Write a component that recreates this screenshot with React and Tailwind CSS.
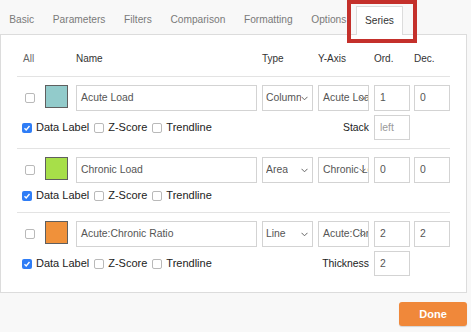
import React from "react";

const tabs = ["Basic", "Parameters", "Filters", "Comparison", "Formatting", "Options", "Series"];

const series = [
  { name: "Acute Load", color: "bg-[#92cbcb]", type: "Column", axis: "Acute Load", ord: "1", dec: "0", extra: { label: "Stack", value: "left", muted: true } },
  { name: "Chronic Load", color: "bg-[#a7df49]", type: "Area", axis: "Chronic Load", ord: "0", dec: "0", extra: null },
  { name: "Acute:Chronic Ratio", color: "bg-[#f0913a]", type: "Line", axis: "Acute:Chronic Ratio", ord: "2", dec: "2", extra: { label: "Thickness", value: "2", muted: false } },
];

const Chevron = ({ className }) => (
  <svg className={className} width="7" height="5" viewBox="0 0 7 5" fill="none">
    <path d="M0.5 0.8 L3.5 3.8 L6.5 0.8" stroke="#666" strokeWidth="1" />
  </svg>
);

const Box = ({ checked }) =>
  checked ? (
    <span className="w-[10px] h-[10px] rounded-[2px] bg-[#2f7df6] flex items-center justify-center shrink-0">
      <svg width="8" height="8" viewBox="0 0 8 8" fill="none">
        <path d="M1.5 4.2 L3.2 5.9 L6.5 2" stroke="white" strokeWidth="1.4" />
      </svg>
    </span>
  ) : (
    <span className="block w-[10px] h-[10px] rounded-[2px] border border-[#b9b9b9] bg-white shrink-0" />
  );

const Field = ({ value, className = "", muted }) => (
  <div
    className={`h-full border border-[#d3d3d3] bg-white flex items-center pl-[4px] overflow-hidden whitespace-nowrap ${
      muted ? "text-[#9a9a9a]" : "text-[#555]"
    } ${className}`}
  >
    {value}
  </div>
);

const SeriesRow = ({ s, last }) => (
  <div className={`pt-[8px] ${last ? "pb-[16px]" : "pb-[8px] border-b border-[#e3e3e3]"}`}>
    <div className="flex h-[26px] text-[10.4px]">
      <div className="w-[28px] flex items-center pl-[8px]">
        <Box />
      </div>
      <div className="w-[31px]">
        <div className={`w-[23px] h-[23px] border border-[#5f5f5f] ${s.color}`} />
      </div>
      <Field value={s.name} className="w-[181px]" />
      <div className="ml-[5px] w-[51px] h-full border border-[#d3d3d3] bg-white flex items-center pl-[3px] pr-[4px] text-[#555]">
        <span className="overflow-hidden whitespace-nowrap">{s.type}</span>
        <Chevron className="ml-auto shrink-0" />
      </div>
      <div className="ml-[5px] w-[51px] h-full relative">
        <div className="h-full border border-[#d3d3d3] bg-white flex items-center pl-[4px] pr-[6px] overflow-hidden whitespace-nowrap text-[#555]">
          {s.axis}
        </div>
        <Chevron className="absolute right-[3px] top-[11px]" />
      </div>
      <Field value={s.ord} className="ml-[5px] w-[36px] pl-[5px]" />
      <Field value={s.dec} className="ml-[4px] w-[36px] pl-[5px]" />
    </div>
    <div className={`mt-[4px] flex items-center text-[11px] text-[#222] ${s.extra ? "h-[25px]" : "h-[17px]"}`}>
      <div className="flex items-center pl-[5px]">
        <Box checked />
        <span className="ml-[4px]">Data Label</span>
        <span className="ml-[5px]">
          <Box />
        </span>
        <span className="ml-[4px]">Z-Score</span>
        <span className="ml-[5px]">
          <Box />
        </span>
        <span className="ml-[4px]">Trendline</span>
      </div>
      {s.extra && (
        <div className="ml-auto flex items-center h-full mr-[40px]">
          <span className="text-[10.4px] text-[#222] mr-[5px]">{s.extra.label}</span>
          <Field value={s.extra.value} muted={s.extra.muted} className="w-[36px] pl-[5px] text-[10.4px]" />
        </div>
      )}
    </div>
  </div>
);

export default function App() {
  return (
    <div
      className="w-[471px] h-[332px] bg-[#f8f8f8] relative overflow-hidden"
      style={{ fontFamily: '"Liberation Sans", Arial, sans-serif' }}
    >
      <div className="w-[467px] flex flex-col">
        {/* tab strip */}
        <div className="h-[34px] flex items-end text-[10.2px]">
          {tabs.map((t) =>
            t === "Series" ? (
              <div
                key={t}
                className="h-[29px] -mb-px relative z-10 bg-white border border-b-0 border-[#dcdcdc] px-[8.4px] flex items-center text-[#333]"
              >
                {t}
              </div>
            ) : (
              <div key={t} className="h-[28px] px-[9.3px] flex items-center text-[#7a7a7a]">
                {t}
              </div>
            )
          )}
        </div>

        {/* series panel */}
        <div className="bg-white border border-[#dcdcdc] px-[16px]">
          <div className="h-[42px] flex items-end pb-[10px] border-b border-[#e3e3e3] text-[10px] leading-[14px] text-[#333]">
            <div className="w-[28px] pl-[6px] text-[#666]">All</div>
            <div className="w-[31px]" />
            <div className="w-[181px]">Name</div>
            <div className="ml-[5px] w-[51px]">Type</div>
            <div className="ml-[5px] w-[51px]">Y-Axis</div>
            <div className="ml-[5px] w-[36px]">Ord.</div>
            <div className="ml-[4px] w-[36px]">Dec.</div>
          </div>
          {series.map((s, i) => (
            <SeriesRow key={s.name} s={s} last={i === series.length - 1} />
          ))}
        </div>

        <button className="self-end mt-[9px] w-[68px] h-[24px] rounded-[3px] bg-[#f0883a] text-white text-[11px] font-bold shadow-[0_1px_1px_rgba(0,0,0,0.15)]">
          Done
        </button>
      </div>

      {/* highlight around the active tab */}
      <div className="absolute left-[347px] top-0 w-[70px] h-[43px] border-[4px] border-[#c4302b]" />
    </div>
  );
}
